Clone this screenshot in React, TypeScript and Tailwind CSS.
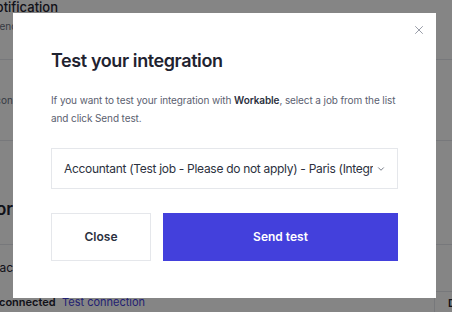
import { X, ChevronDown } from 'lucide-react';

function BackgroundPage() {
  return (
    <div className="flex flex-col w-full h-full bg-white text-[#1f2330]">
      <div className="h-[60px] border-b border-gray-200 flex flex-col">
        <div className="w-[58px] overflow-hidden flex justify-end">
          <span className="whitespace-nowrap text-[13px] font-medium leading-[18px] -mt-[2px]">Slack notification</span>
        </div>
        <div className="w-[13px] overflow-hidden mt-[3px]">
          <span className="block -ml-[7px] whitespace-nowrap text-[10px] text-gray-500">Sends candidates</span>
        </div>
      </div>
      <div className="h-[81px] border-b border-gray-200 flex items-center">
        <div className="w-[13px] overflow-hidden flex justify-end">
          <span className="whitespace-nowrap text-[10px] text-gray-500">Icon</span>
        </div>
      </div>
      <div className="h-[104px] border-b border-gray-200 flex items-center pt-[34px]">
        <div className="w-[13px] overflow-hidden flex justify-end">
          <span className="whitespace-nowrap text-[17px] font-semibold">Connector</span>
        </div>
      </div>
      <div className="h-[46px] flex items-center">
        <div className="w-[13px] overflow-hidden flex justify-end">
          <span className="whitespace-nowrap text-[12px]">Trac</span>
        </div>
      </div>
      <div className="flex-1 flex items-start">
        <span className="text-[11px] font-semibold leading-none mt-[6px] -ml-[1px] w-[63px]">connected</span>
        <span className="text-[11px] text-[#4340dc] leading-none mt-[6px]">Test connection</span>
        <div className="ml-auto w-[18px] h-full border-t border-l border-gray-200 pl-[13px] pt-[6px] text-[11px] font-semibold leading-none overflow-hidden">D</div>
      </div>
    </div>
  );
}

export default function App() {
  return (
    <div
      className="relative w-[452px] h-[312px] overflow-hidden"
      style={{ fontFamily: 'Inter, "Noto Sans", sans-serif' }}
    >
      <BackgroundPage />
      <div className="absolute inset-0 bg-black/[0.48]">
        <div className="relative ml-[13px] mt-[13px] w-[423px] h-[285px] bg-white px-[38px] pt-[36px]">
          <button className="absolute right-[10px] top-[10px] text-[#8a8f9c]">
            <X size={14} strokeWidth={1.5} />
          </button>
          <h2 className="text-[18px] font-semibold leading-[24px] tracking-[-0.4px] text-[#1f2330]">
            Test your integration
          </h2>
          <p className="mt-[18px] text-[10px] leading-[18px] tracking-[-0.1px] text-[#5b6170]">
            If you want to test your integration with <span className="font-semibold text-[#2c3140]">Workable</span>, select a job from the list and click Send test.
          </p>
          <div className="mt-[21px] h-[41px] border border-gray-200 flex items-center pl-[12px] pr-[11px]">
            <span className="flex-1 overflow-hidden whitespace-nowrap text-[12px] tracking-[-0.3px] text-[#2c3140]">
              Accountant (Test job - Please do not apply) - Paris (Integration)
            </span>
            <ChevronDown size={10} className="ml-[3px] text-[#5b6170]" />
          </div>
          <div className="mt-[24px] flex gap-[12px]">
            <button className="w-[100px] h-[48px] border border-gray-200 text-[12px] font-semibold text-[#2c3140]">
              Close
            </button>
            <button className="flex-1 h-[48px] bg-[#4340dc] text-[12px] font-semibold text-white">
              Send test
            </button>
          </div>
        </div>
      </div>
    </div>
  );
}
